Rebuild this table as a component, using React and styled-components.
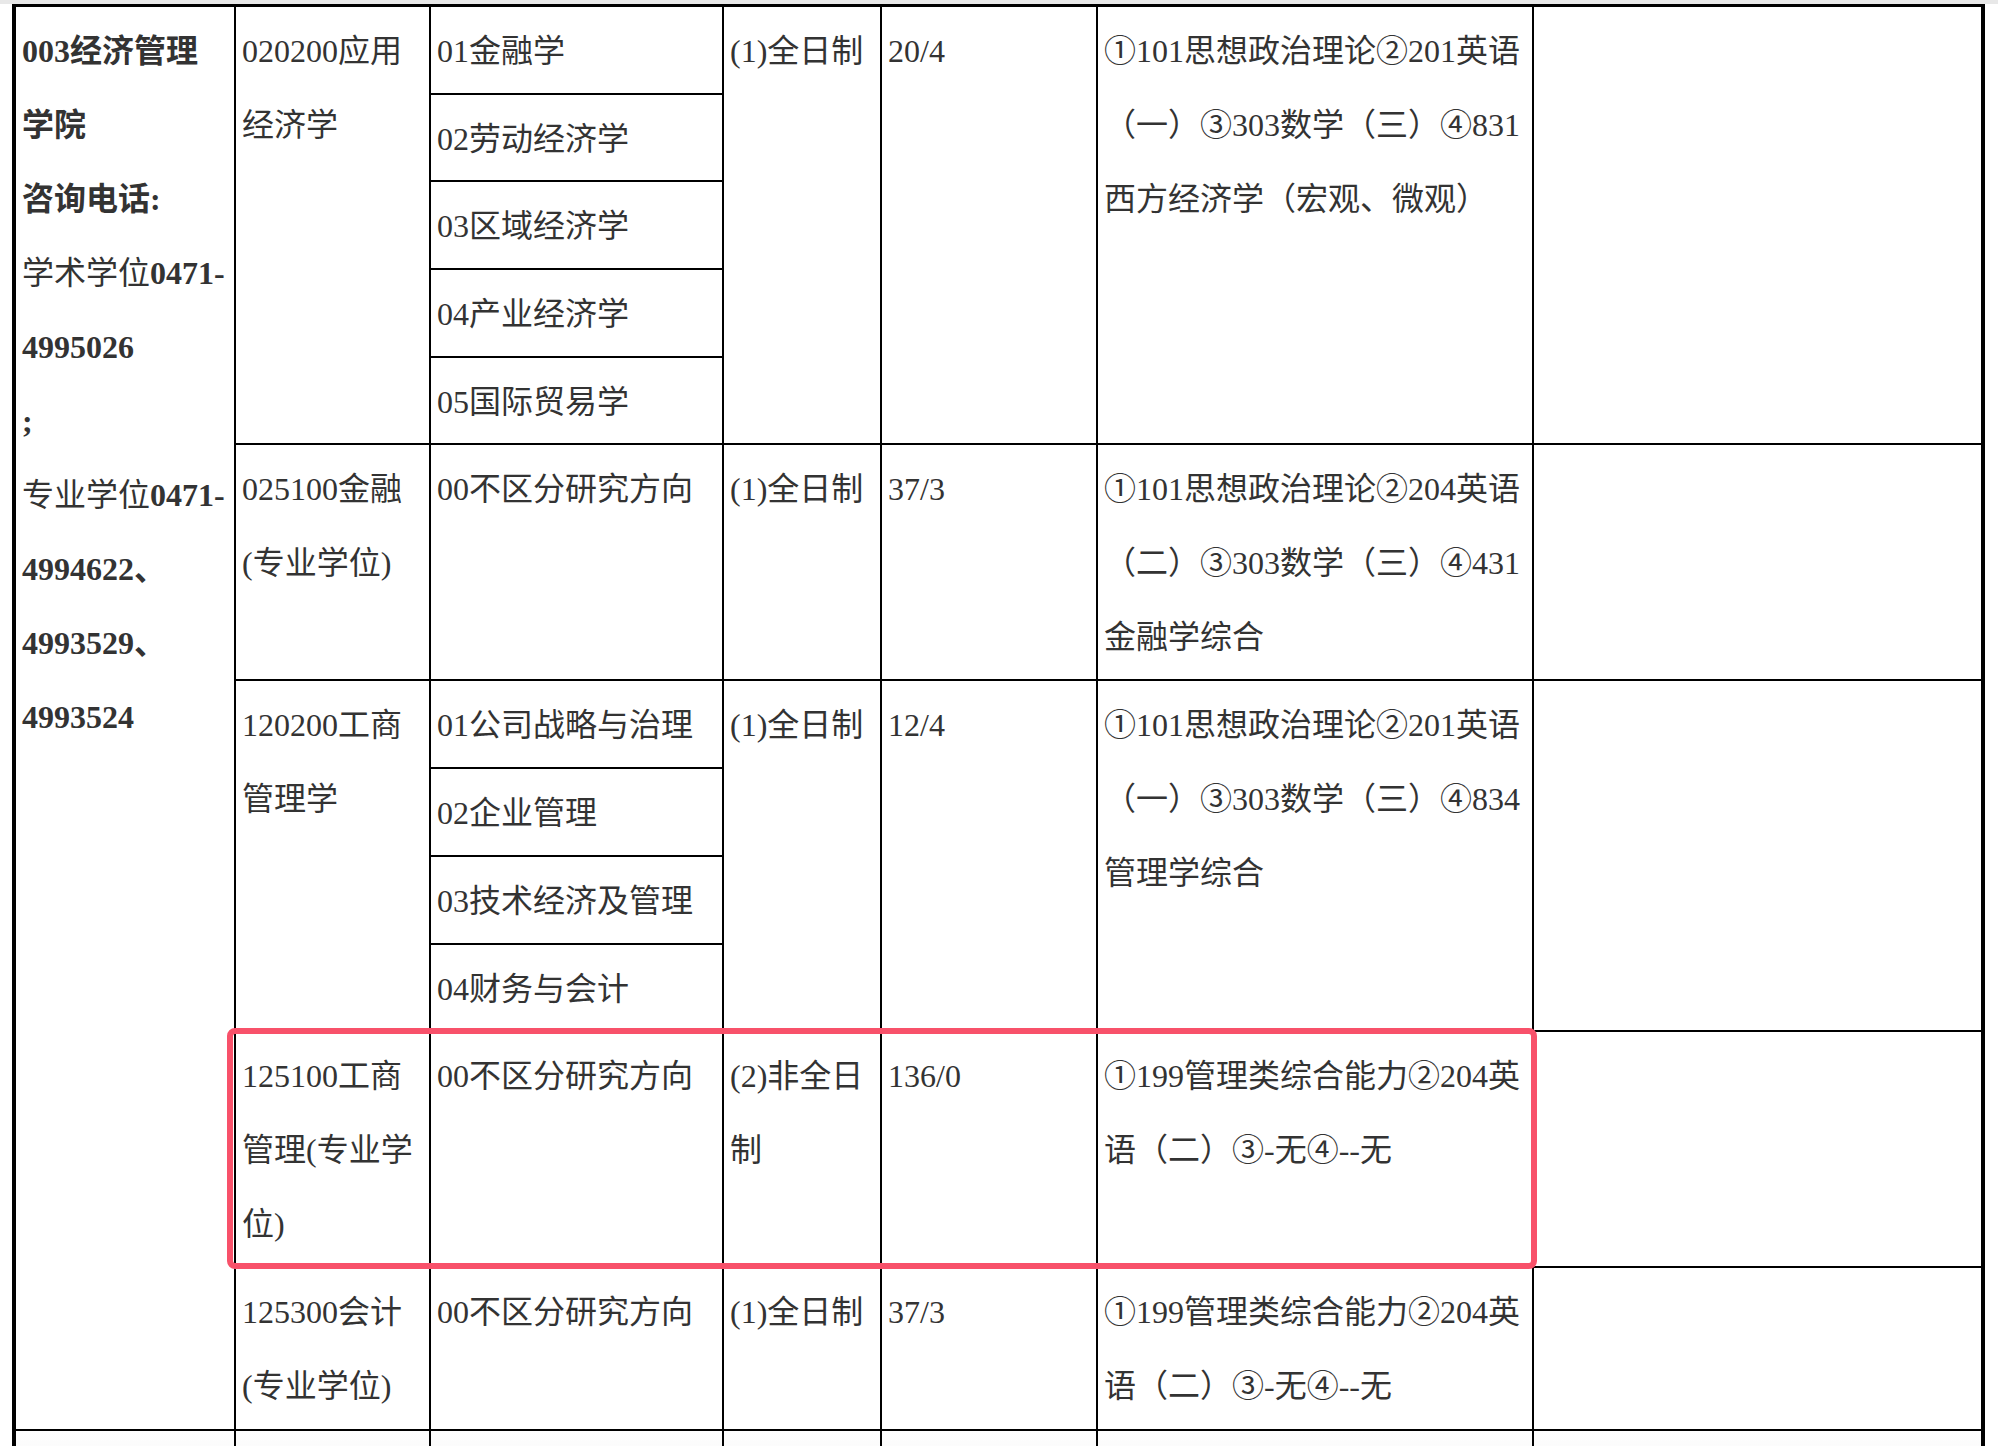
import React from "react";
import styled, { createGlobalStyle } from "styled-components";

const GlobalStyle = createGlobalStyle`
  html, body {
    margin: 0;
    padding: 0;
    background: #fff;
    overflow: hidden;
  }
  body {
    font-family: "Liberation Serif", "Noto Sans CJK SC", serif;
  }
`;

const Page = styled.div`
  width: 1998px;
  height: 1446px;
  overflow: hidden;
  background: #fff;
`;

const TopStrip = styled.div`
  height: 4px;
  background: #e8e8e8;
`;

const Sheet = styled.div`
  display: grid;
  grid-template-columns: 220px 195px 293px 158px 216px 436px 449px;
  grid-template-rows: repeat(5, 87.7px) 236px repeat(4, 87.7px) 236px 163px 140px;
  width: max-content;
  margin-left: 12px;
  border-top: 3px solid #000;
  border-left: 4px solid #000;
  border-right: 2px solid #000;
`;

const Cell = styled.div`
  grid-row: ${(p) => p.$row};
  grid-column: ${(p) => p.$col};
  box-sizing: border-box;
  border-right: 2px solid #000;
  border-bottom: 2px solid #000;
  padding: 7px 6px 0;
  font-size: 32px;
  line-height: 74px;
  color: #333;
  white-space: nowrap;
  font-weight: ${(p) => (p.$bold ? 700 : 400)};
  background: ${(p) => (p.$fade ? "linear-gradient(#fdfdfd, #f1f1f1)" : "transparent")};
`;

const Plain = styled.span`
  font-weight: 400;
`;

const Highlight = styled.div`
  grid-row: 11;
  grid-column: 2 / 7;
  margin: -4px -3px -1px -9px;
  border: 6px solid #f8516a;
  border-radius: 8px;
  z-index: 1;
  pointer-events: none;
`;

const lines = (arr) =>
  arr.map((t, i) => (
    <React.Fragment key={i}>
      {i > 0 && <br />}
      {t}
    </React.Fragment>
  ));

const cells = [
  // 020200 应用经济学
  { row: "1 / 6", col: 2, text: ["020200应用", "经济学"] },
  { row: "1", col: 3, text: ["01金融学"] },
  { row: "2", col: 3, text: ["02劳动经济学"] },
  { row: "3", col: 3, text: ["03区域经济学"] },
  { row: "4", col: 3, text: ["04产业经济学"] },
  { row: "5", col: 3, text: ["05国际贸易学"] },
  { row: "1 / 6", col: 4, text: ["(1)全日制"] },
  { row: "1 / 6", col: 5, text: ["20/4"] },
  {
    row: "1 / 6",
    col: 6,
    text: ["①101思想政治理论②201英语", "（一）③303数学（三）④831", "西方经济学（宏观、微观）"],
  },
  { row: "1 / 6", col: 7, text: [] },
  // 025100 金融
  { row: "6", col: 2, text: ["025100金融", "(专业学位)"] },
  { row: "6", col: 3, text: ["00不区分研究方向"] },
  { row: "6", col: 4, text: ["(1)全日制"] },
  { row: "6", col: 5, text: ["37/3"] },
  {
    row: "6",
    col: 6,
    text: ["①101思想政治理论②204英语", "（二）③303数学（三）④431", "金融学综合"],
  },
  { row: "6", col: 7, text: [] },
  // 120200 工商管理学
  { row: "7 / 11", col: 2, text: ["120200工商", "管理学"] },
  { row: "7", col: 3, text: ["01公司战略与治理"] },
  { row: "8", col: 3, text: ["02企业管理"] },
  { row: "9", col: 3, text: ["03技术经济及管理"] },
  { row: "10", col: 3, text: ["04财务与会计"] },
  { row: "7 / 11", col: 4, text: ["(1)全日制"] },
  { row: "7 / 11", col: 5, text: ["12/4"] },
  {
    row: "7 / 11",
    col: 6,
    text: ["①101思想政治理论②201英语", "（一）③303数学（三）④834", "管理学综合"],
  },
  { row: "7 / 11", col: 7, text: [] },
  // 125100 工商管理（专业学位）
  { row: "11", col: 2, text: ["125100工商", "管理(专业学", "位)"] },
  { row: "11", col: 3, text: ["00不区分研究方向"] },
  { row: "11", col: 4, text: ["(2)非全日", "制"] },
  { row: "11", col: 5, text: ["136/0"] },
  { row: "11", col: 6, text: ["①199管理类综合能力②204英", "语（二）③-无④--无"] },
  { row: "11", col: 7, text: [] },
  // 125300 会计
  { row: "12", col: 2, text: ["125300会计", "(专业学位)"] },
  { row: "12", col: 3, text: ["00不区分研究方向"] },
  { row: "12", col: 4, text: ["(1)全日制"] },
  { row: "12", col: 5, text: ["37/3"] },
  { row: "12", col: 6, text: ["①199管理类综合能力②204英", "语（二）③-无④--无"] },
  { row: "12", col: 7, text: [] },
];

const College = () => (
  <Cell $row="1 / 13" $col={1} $bold>
    003经济管理
    <br />
    学院
    <br />
    咨询电话:
    <br />
    <Plain>学术学位</Plain>0471-
    <br />
    4995026
    <br />
    ;
    <br />
    <Plain>专业学位</Plain>0471-
    <br />
    4994622、
    <br />
    4993529、
    <br />
    4993524
  </Cell>
);

export default function App() {
  return (
    <Page>
      <GlobalStyle />
      <TopStrip />
      <Sheet>
        <College />
        {cells.map((c, i) => (
          <Cell key={i} $row={c.row} $col={c.col}>
            {lines(c.text)}
          </Cell>
        ))}
        {[1, 2, 3, 4, 5, 6, 7].map((col) => (
          <Cell key={"tail" + col} $row="13" $col={col} $fade />
        ))}
        <Highlight />
      </Sheet>
    </Page>
  );
}
